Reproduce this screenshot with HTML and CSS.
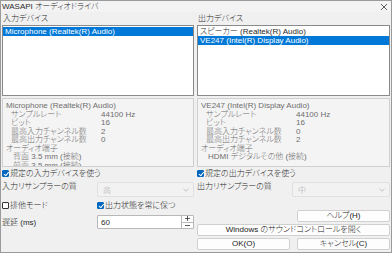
FILE: index.html
```html
<!DOCTYPE html>
<html lang="ja">
<head>
<meta charset="utf-8">
<link rel="stylesheet" href="styles.css">
</head>
<body>
<div class="win">
  <div class="titlebar">
    <span class="title">WASAPI オーディオドライバ</span>
    <svg class="close" width="8" height="8" viewBox="0 0 8 8"><path d="M1 1L7 7M7 1L1 7" stroke="#333" stroke-width="0.8"/></svg>
  </div>
  <div class="cols">
    <div class="col">
      <div class="label">入力デバイス</div>
      <div class="list">
        <div class="item sel">Microphone (Realtek(R) Audio)</div>
      </div>
      <div class="info">
        <div class="i-name">Microphone (Realtek(R) Audio)</div>
        <div class="i-row"><span class="k">サンプルレート</span><span class="v">44100 Hz</span></div>
        <div class="i-row"><span class="k">ビット</span><span class="v">16</span></div>
        <div class="i-row"><span class="k">最高入力チャンネル数</span><span class="v">2</span></div>
        <div class="i-row"><span class="k">最高出力チャンネル数</span><span class="v">0</span></div>
        <div class="i-name">オーディオ端子</div>
        <div class="i-sub">背面 3.5 mm (接続)</div>
        <div class="i-sub">前面 3.5 mm (接続)</div>
      </div>
      <div class="chk"><span class="box on"></span>規定の入力デバイスを使う</div>
      <div class="rs"><span class="rs-label">入力リサンプラーの質</span><div class="select"><span>高</span><svg width="6" height="4" viewBox="0 0 6 4"><path d="M0.5 0.8L3 3.2L5.5 0.8" fill="none" stroke="#aaa" stroke-width="0.7"/></svg></div></div>
      <div class="bottom-left">
        <div class="chk-row">
          <div class="chk"><span class="box"></span>排他モード</div>
          <div class="chk"><span class="box on"></span>出力状態を常に保つ</div>
        </div>
        <div class="lat-row">
          <span class="lat-label">遅延 (ms)</span>
          <div class="spin">
            <span class="spin-val">60</span>
            <div class="spin-btns">
              <span class="sb"><svg width="5" height="5" viewBox="0 0 5 5"><path d="M0 2.5H5M2.5 0V5" stroke="#333" stroke-width="0.8"/></svg></span>
              <span class="sb"><svg width="5" height="5" viewBox="0 0 5 5"><path d="M0 2.5H5" stroke="#333" stroke-width="0.8"/></svg></span>
            </div>
          </div>
        </div>
      </div>
    </div>
    <div class="col">
      <div class="label">出力デバイス</div>
      <div class="list">
        <div class="item">スピーカー (Realtek(R) Audio)</div>
        <div class="item sel">VE247 (Intel(R) Display Audio)</div>
      </div>
      <div class="info">
        <div class="i-name">VE247 (Intel(R) Display Audio)</div>
        <div class="i-row"><span class="k">サンプルレート</span><span class="v">44100 Hz</span></div>
        <div class="i-row"><span class="k">ビット</span><span class="v">16</span></div>
        <div class="i-row"><span class="k">最高入力チャンネル数</span><span class="v">0</span></div>
        <div class="i-row"><span class="k">最高出力チャンネル数</span><span class="v">2</span></div>
        <div class="i-name">オーディオ端子</div>
        <div class="i-sub">HDMI デジタルその他 (接続)</div>
      </div>
      <div class="chk"><span class="box on"></span>規定の出力デバイスを使う</div>
      <div class="rs"><span class="rs-label">出力リサンプラーの質</span><div class="select"><span>中</span><svg width="6" height="4" viewBox="0 0 6 4"><path d="M0.5 0.8L3 3.2L5.5 0.8" fill="none" stroke="#aaa" stroke-width="0.7"/></svg></div></div>
      <div class="bottom-right">
        <div class="btn-row end"><button class="btn half">ヘルプ(H)</button></div>
        <div class="btn-row"><button class="btn full">Windows のサウンドコントロールを開く</button></div>
        <div class="btn-row split"><button class="btn half">OK(O)</button><button class="btn half">キャンセル(C)</button></div>
      </div>
    </div>
  </div>
</div>
</body>
</html>
```
FILE: styles.css
```css
* { box-sizing: border-box; }
html, body { margin: 0; padding: 0; }
body {
  width: 392px; height: 253px; overflow: hidden;
  font-family: "Liberation Sans", "Noto Sans CJK JP", sans-serif;
  font-size: 8px;
  font-weight: 300;
  font-feature-settings: "palt";
  color: #2b2b2b;
  background: #f0f0f0;
}
.win {
  width: 392px; height: 253px;
  border: 1px solid #9a9a9a;
  background: #f0f0f0;
  display: flex; flex-direction: column;
  overflow: hidden;
}
.titlebar {
  height: 11px; flex: none;
  display: flex; align-items: center; justify-content: space-between;
  padding: 0 3px 0 1px;
  background: #f3f3f3;
  line-height: 11px;
}
.cols {
  display: grid;
  grid-template-columns: 192px 193px;
  column-gap: 3px;
  padding: 0 1px 0 1px;
  flex: 1;
}
.col { display: flex; flex-direction: column; }
.label { height: 13px; line-height: 13px; padding-left: 1px; }
.list {
  height: 71px;
  background: #fff;
  border: 1px solid #8a8a8a;
  padding: 1px 0 0 0;
}
.item { height: 9px; line-height: 9px; padding-left: 2px; white-space: nowrap; }
.item.sel { background: #0078d7; color: #fff; }
.info {
  height: 69px; margin-top: 2px;
  background: #f4f4f4;
  border: 1px solid #cfcfcf;
  color: #6e6e6e;
  padding: 3px 0 0 3px;
  overflow: hidden;
  line-height: 8.5px;
}
.i-row { display: flex; padding-left: 5px; }
.i-row .k { width: 90px; }
.i-sub { padding-left: 7px; }
.chk { display: flex; align-items: center; height: 13px; line-height: 13px; white-space: nowrap; }
.box {
  width: 7px; height: 7px; margin-right: 1px; flex: none;
  border: 1px solid #333; border-radius: 1px; background: #fff;
  position: relative;
}
.box.on { background: #0067c0; border-color: #0067c0; }
.box.on::after {
  content: ""; position: absolute; left: 1.5px; top: 0px;
  width: 2px; height: 3.5px;
  border: solid #fff; border-width: 0 1px 1px 0;
  transform: rotate(40deg);
}
.rs { display: flex; height: 17px; align-items: flex-start; }
.rs-label { width: 95px; line-height: 13px; }
.select {
  flex: 1; height: 15px; margin-top: 2px;
  display: flex; align-items: center; justify-content: space-between;
  padding: 0 4px 0 5px;
  border: 1px solid #e0e0e0; border-radius: 2px;
  background: #f2f2f2; color: #a8a8a8;
}
.bottom-left { padding-top: 2px; }
.chk-row { display: flex; }
.chk-row .chk:first-child { width: 95px; }
.lat-row { display: flex; align-items: center; margin-top: 3px; }
.lat-label { width: 95px; margin-top: -1px; }
.spin {
  flex: 1; height: 14px;
  display: flex; align-items: center; justify-content: space-between;
  background: #fff; border: 1px solid #b8b8b8; border-radius: 1px;
  padding-left: 3px;
}
.spin-btns {
  width: 12px; height: 12px; display: flex; flex-direction: column;
  border-left: 1px solid #b8b8b8;
}
.sb { flex: 1; display: flex; align-items: center; justify-content: center; }
.sb:first-child { border-bottom: 1px solid #b8b8b8; }
.bottom-right { display: flex; flex-direction: column; padding-top: 13px; gap: 2px; }
.btn-row { display: flex; height: 12px; }
.btn-row.end { justify-content: flex-end; }
.btn-row.split { justify-content: space-between; }
.btn {
  font: inherit; color: #1a1a1a;
  height: 12px; padding: 0; line-height: 10px;
  background: #fdfdfd; border: 1px solid #d0d0d0; border-radius: 2px;
  white-space: nowrap;
}
.btn.half { width: 93px; }
.btn.full { width: 100%; }
```
